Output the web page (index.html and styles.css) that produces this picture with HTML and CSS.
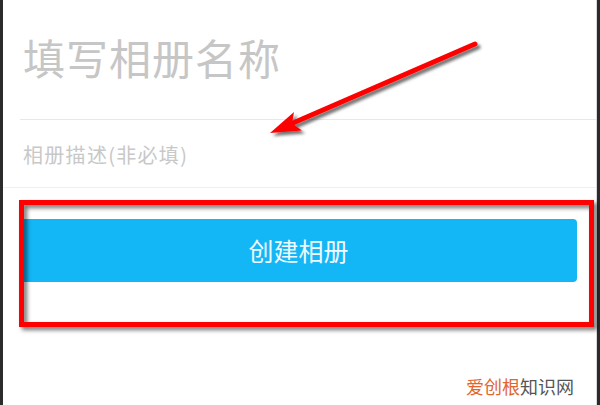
FILE: index.html
```html
<!DOCTYPE html>
<html lang="zh-CN">
<head>
<meta charset="utf-8">
<title>创建相册</title>
<link rel="stylesheet" href="styles.css">
</head>
<body>
<div class="frame">
  <div class="edge edge-left"></div>
  <main class="content">
    <div class="title-row">
      <div class="title">填写相册名称</div>
    </div>
    <div class="desc-row">
      <div class="desc">相册描述(非必填)</div>
    </div>
    <div class="actions">
      <button class="create-btn">创建相册</button>
    </div>
  </main>
  <div class="edge edge-right"></div>

  <div class="highlight-box"></div>
  <svg class="arrow" width="600" height="405" viewBox="0 0 600 405">
    <defs>
      <filter id="sh" x="-20%" y="-20%" width="140%" height="140%">
        <feDropShadow dx="3" dy="3" stdDeviation="1.8" flood-color="#000" flood-opacity="0.55"/>
      </filter>
    </defs>
    <g filter="url(#sh)">
      <line x1="475" y1="44" x2="293" y2="123" stroke="#ff0000" stroke-width="5" stroke-linecap="round"/>
      <polygon points="270,133 294,112 292,123.5 302,130.5" fill="#ff0000"/>
    </g>
  </svg>
  <div class="watermark"><span class="wm-a">爱创根</span><span class="wm-b">知识网</span></div>
</div>
</body>
</html>
```

FILE: styles.css
```css
* { box-sizing: border-box; }
html, body {
  margin: 0;
  padding: 0;
  width: 600px;
  height: 405px;
  overflow: hidden;
  background: #ffffff;
}
body {
  font-family: "Noto Sans CJK SC", "Noto Sans", sans-serif;
}
.frame {
  position: relative;
  display: flex;
  width: 600px;
  height: 405px;
}
.edge {
  flex: 0 0 auto;
  background: #2b2b2b;
}
.edge-left { width: 3px; }
.edge-right {
  width: 4px;
  border-left: 1px solid #d9d9d9;
}
.content {
  flex: 1 1 auto;
  display: flex;
  flex-direction: column;
  background: #fff;
}
.title-row {
  margin-left: 17px;
  height: 120px;
  padding-top: 36px;
  padding-left: 3px;
  border-bottom: 1px solid #e8e8e8;
}
.title {
  font-size: 42px;
  line-height: 42px;
  letter-spacing: 1px;
  color: #c6c6c6;
  white-space: nowrap;
}
.desc-row {
  height: 68px;
  padding-top: 25px;
  padding-left: 20px;
  border-bottom: 1px solid #f0f0f0;
}
.desc {
  font-size: 20px;
  line-height: 20px;
  letter-spacing: 1.3px;
  color: #c8c8c8;
  white-space: nowrap;
}
.actions {
  display: flex;
  padding: 31px 19px 0 17px;
}
.create-btn {
  flex: 1 1 auto;
  height: 63px;
  border: 0;
  border-radius: 4px;
  background: #13b7f6;
  color: #eef9ff;
  font-family: "Noto Sans CJK SC", "Noto Sans", sans-serif;
  font-size: 25px;
  line-height: 63px;
  padding: 0;
  text-align: center;
}
.highlight-box {
  position: absolute;
  left: 19px;
  top: 200px;
  width: 575px;
  height: 127px;
  border: 5px solid #ff0000;
  filter: drop-shadow(3px 3px 2px rgba(0,0,0,0.55));
  pointer-events: none;
}
.arrow {
  position: absolute;
  left: 0;
  top: 0;
  pointer-events: none;
}
.watermark {
  position: absolute;
  left: 466px;
  top: 375px;
  font-size: 18px;
  line-height: 22px;
  white-space: nowrap;
}
.wm-a { color: #e2662c; }
.wm-b { color: #555555; }
```
